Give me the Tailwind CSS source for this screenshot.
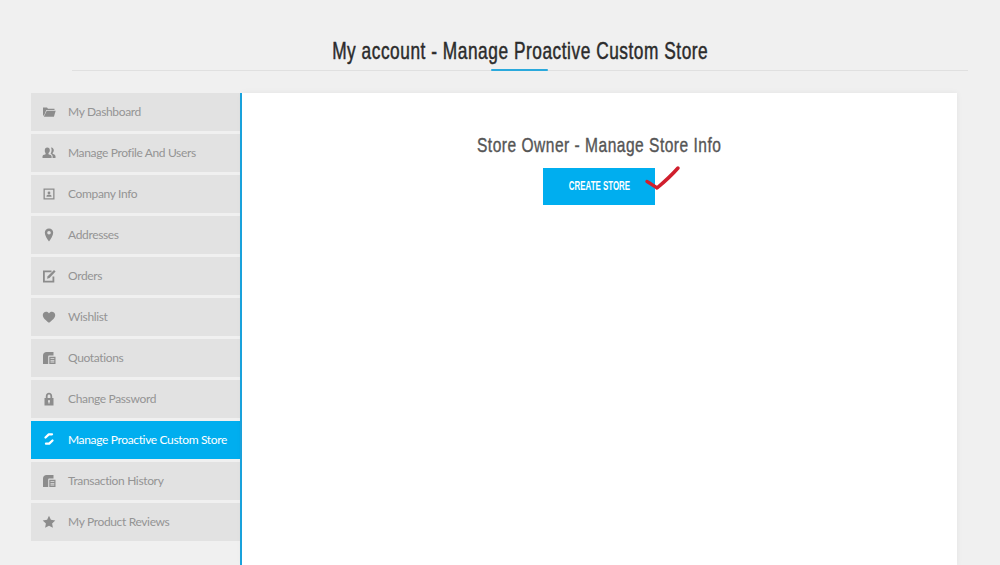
<!DOCTYPE html>
<html>
<head>
<meta charset="utf-8">
<script src="https://cdn.jsdelivr.net/npm/@tailwindcss/browser@4"></script>
</head>
<body class="m-0 h-[565px] w-[1000px] overflow-hidden bg-[#f0f0f0] font-['Lato','Liberation_Sans',sans-serif]">
<div class="pl-[72px] pr-[32px] pt-[36px]">
  <div class="relative h-[35px] border-b border-[#e0e0e0] text-center">
    <h1 class="inline-block scale-x-[0.72] whitespace-nowrap text-[24px] leading-[29px] tracking-[0.75px] font-normal text-[#2b2b2b] font-['Liberation_Sans',sans-serif] [-webkit-text-stroke:0.5px_#2b2b2b]">My account - Manage Proactive Custom Store</h1>
    <div class="absolute left-[419px] top-[33px] h-[2px] w-[57px] rounded-full bg-[#2aa9dc]"></div>
  </div>
</div>
<div class="mt-[22px] flex pl-[31px]">
  <nav class="flex h-[472px] w-[211px] flex-col gap-[3px] border-r-2 border-[#1aa5e0] text-[12px] tracking-[-0.35px] text-[#949494]">
    <a class="flex h-[38px] shrink-0 items-center whitespace-nowrap bg-[#e2e2e2]"><span class="mr-[1px] flex w-[36px] justify-center"><svg class="h-[14px] w-[14px] fill-[#8c8c8c]" viewBox="0 0 14 14"><path d="M1 2.500h4l1 1.200h6.500v1.300H4.300L2 10.500H1z"/><path d="M4.700 5.800h9l-1.800 6H1.800z"/></svg></span><span>My Dashboard</span></a>
    <a class="flex h-[38px] shrink-0 items-center whitespace-nowrap bg-[#e2e2e2]"><span class="mr-[1px] flex w-[36px] justify-center"><svg class="h-[14px] w-[14px] fill-[#8c8c8c]" viewBox="0 0 14 14"><path d="M2.800 4.200a2.500 2.700 0 1 1 5 0c0 1.300-.6 2.300-1.300 2.800v1.200c2 .5 3.100 1 3.100 2.300v1.500H.5v-1.500c0-1.300 1.100-1.800 3.100-2.300V7c-.7-.5-.8-1.500-.8-2.800z"/><path d="M9 1.700a2.200 2.500 0 0 1 2.800 2.500c0 1.200-.5 2.100-1.100 2.600v1.100c1.700.4 2.800 1 2.800 2.300v1.800h-2.900v-1.600c0-1.500-1-2.200-2-2.700.5-.9 1-2.300 1-3.800 0-.9-.2-1.600-.6-2.200z"/></svg></span><span>Manage Profile And Users</span></a>
    <a class="flex h-[38px] shrink-0 items-center whitespace-nowrap bg-[#e2e2e2]"><span class="mr-[1px] flex w-[36px] justify-center"><svg class="h-[14px] w-[14px] fill-[#8c8c8c]" viewBox="0 0 14 14"><path fill-rule="evenodd" d="M1.500 1.500h11v11h-11zM2.800 2.800v8.400h8.400V2.800z"/><circle cx="7" cy="6" r="1.400"/><path d="M4.500 9.800h5V9c0-.8-1-1.200-2.500-1.200S4.500 8.200 4.500 9z"/></svg></span><span>Company Info</span></a>
    <a class="flex h-[38px] shrink-0 items-center whitespace-nowrap bg-[#e2e2e2]"><span class="mr-[1px] flex w-[36px] justify-center"><svg class="h-[14px] w-[14px] fill-[#8c8c8c]" viewBox="0 0 14 14"><path fill-rule="evenodd" d="M7 .5c2.500 0 4.200 1.800 4.200 4.200 0 2.600-2.400 6.300-4.200 8.800C5.200 11 2.800 7.300 2.800 4.700 2.800 2.300 4.500.5 7 .5zM7 3a1.800 1.800 0 1 0 0 3.600A1.800 1.800 0 0 0 7 3z"/></svg></span><span>Addresses</span></a>
    <a class="flex h-[38px] shrink-0 items-center whitespace-nowrap bg-[#e2e2e2]"><span class="mr-[1px] flex w-[36px] justify-center"><svg class="h-[14px] w-[14px] fill-[#8c8c8c]" viewBox="0 0 14 14"><path d="M1 1.500h8.500v1.800H2.800v8.400h7.700V7.500h1.800v6H1z"/><path d="M12 1l1.600 1.600L7.500 9 5 9.700l.7-2.500z"/></svg></span><span>Orders</span></a>
    <a class="flex h-[38px] shrink-0 items-center whitespace-nowrap bg-[#e2e2e2]"><span class="mr-[1px] flex w-[36px] justify-center"><svg class="h-[14px] w-[14px] fill-[#8c8c8c]" viewBox="0 0 14 14"><path d="M7 12.800C4 10.300.8 8.200.8 5 .8 3 2.300 1.700 4.100 1.700 5.400 1.700 6.500 2.400 7 3.400 7.500 2.400 8.600 1.700 9.900 1.700c1.800 0 3.300 1.300 3.300 3.300 0 3.200-3.200 5.300-6.200 7.800z"/></svg></span><span>Wishlist</span></a>
    <a class="flex h-[38px] shrink-0 items-center whitespace-nowrap bg-[#e2e2e2]"><span class="mr-[1px] flex w-[36px] justify-center"><svg class="h-[14px] w-[14px] fill-[#8c8c8c]" viewBox="0 0 14 14"><path d="M1 4.500C1 2.500 2.500 1 4.500 1h7v3.500H7.500c-1 0-1.300.5-1.300 1.300v7.200H1z"/><path fill-rule="evenodd" d="M7.300 5.700h6.200v7.300H7.300zM8.500 7.200v.9h3.800v-.9zM8.500 9v.8h3.800V9zM8.500 10.600v.8h3.800v-.8z"/></svg></span><span>Quotations</span></a>
    <a class="flex h-[38px] shrink-0 items-center whitespace-nowrap bg-[#e2e2e2]"><span class="mr-[1px] flex w-[36px] justify-center"><svg class="h-[14px] w-[14px] fill-[#8c8c8c]" viewBox="0 0 14 14"><path fill-rule="evenodd" d="M3.800 6V4.200C3.800 2.300 5.200.8 7 .8s3.200 1.500 3.200 3.400V6h1.300v7.500h-9V6zM5.600 6h2.800V4.200c0-.9-.6-1.600-1.400-1.600s-1.400.7-1.400 1.600zM7 8a1.100 1.100 0 0 0-.6 2v1.500h1.200V10A1.100 1.100 0 0 0 7 8z"/></svg></span><span>Change Password</span></a>
    <a class="flex h-[38px] shrink-0 items-center whitespace-nowrap bg-[#00aeef] text-white"><span class="mr-[1px] flex w-[36px] justify-center"><svg class="h-[14px] w-[14px] -translate-y-[1px]" viewBox="0 0 14 14" fill="none" stroke="#fff" stroke-width="2.300" stroke-linecap="round" stroke-linejoin="round"><path d="M3.500 5.500 6.800 2.300H10"/><path d="M10.500 8.500 7.200 11.700H4"/></svg></span><span>Manage Proactive Custom Store</span></a>
    <a class="flex h-[38px] shrink-0 items-center whitespace-nowrap bg-[#e2e2e2]"><span class="mr-[1px] flex w-[36px] justify-center"><svg class="h-[14px] w-[14px] fill-[#8c8c8c]" viewBox="0 0 14 14"><path d="M1 4.500C1 2.500 2.500 1 4.500 1h7v3.500H7.500c-1 0-1.300.5-1.300 1.300v7.200H1z"/><path fill-rule="evenodd" d="M7.300 5.700h6.200v7.300H7.300zM8.500 7.200v.9h3.800v-.9zM8.500 9v.8h3.800V9zM8.500 10.600v.8h3.800v-.8z"/></svg></span><span>Transaction History</span></a>
    <a class="flex h-[38px] shrink-0 items-center whitespace-nowrap bg-[#e2e2e2]"><span class="mr-[1px] flex w-[36px] justify-center"><svg class="h-[14px] w-[14px] fill-[#8c8c8c]" viewBox="0 0 14 14"><path d="M7 .8l1.900 4 4.400.6-3.200 3 .8 4.400L7 10.700l-3.900 2.100.8-4.400-3.200-3 4.400-.6z"/></svg></span><span>My Product Reviews</span></a>
  </nav>
  <main class="h-[472px] w-[715px] bg-white pt-[38px] shadow-[0_0_6px_rgba(0,0,0,0.06)] text-center">
    <h2 class="inline-block scale-x-[0.74] whitespace-nowrap text-[21px] leading-[28px] tracking-[0.68px] font-normal text-[#555] font-['Liberation_Sans',sans-serif] [-webkit-text-stroke:0.4px_#555]">Store Owner - Manage Store Info</h2>
    <div class="relative ml-[301px] mt-[9px] flex h-[37px] w-[112px] items-center justify-center bg-[#00aeef] pb-[1px] text-white">
      <span class="inline-block scale-x-[0.66] whitespace-nowrap text-[12px] font-bold font-['Liberation_Sans',sans-serif]">CREATE STORE</span>
      <svg class="absolute left-[100px] top-[-3px] h-[28px] w-[38px]" viewBox="0 0 38 28" fill="none" stroke="#d01f2d" stroke-width="3.500" stroke-linecap="round" stroke-linejoin="round"><path d="M4 16.500 C7 18 11 21 14 23 C20 18 28 11 35 3"/></svg>
    </div>
  </main>
</div>
</body>
</html>
